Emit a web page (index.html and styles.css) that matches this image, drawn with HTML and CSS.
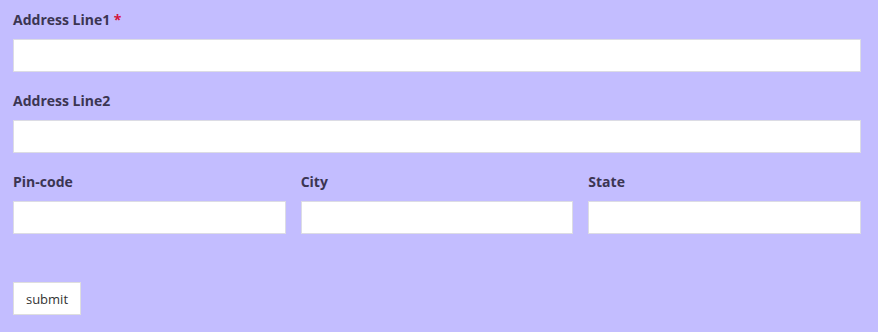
FILE: index.html
```html
<!DOCTYPE html>
<html>
<head>
<meta charset="utf-8">
<link rel="stylesheet" href="styles.css">
</head>
<body>
<form class="form">
  <div class="group">
    <label class="label">Address Line1 <span class="req">*</span></label>
    <input class="input" type="text">
  </div>
  <div class="group">
    <label class="label">Address Line2</label>
    <input class="input" type="text">
  </div>
  <div class="row">
    <div class="group">
      <label class="label">Pin-code</label>
      <input class="input" type="text">
    </div>
    <div class="group">
      <label class="label">City</label>
      <input class="input" type="text">
    </div>
    <div class="group">
      <label class="label">State</label>
      <input class="input" type="text">
    </div>
  </div>
  <div class="actions">
    <button class="btn" type="button">submit</button>
  </div>
</form>
</body>
</html>
```
FILE: styles.css
```css
html, body {
  margin: 0;
  padding: 0;
  background: #c3bdff;
  height: 100%;
}
.form {
  padding: 10px 17px 0 13px;
  display: flex;
  flex-direction: column;
  gap: 19px;
  font-family: "Open Sans", "Noto Sans", sans-serif;
}
.group {
  display: flex;
  flex-direction: column;
  gap: 9px;
  min-width: 0;
}
.label {
  font-size: 14px;
  font-weight: 700;
  line-height: 20px;
  color: #3b3552;
}
.req {
  color: #d4143c;
}
.input {
  box-sizing: border-box;
  height: 33px;
  width: 100%;
  margin: 0;
  border: 1px solid #dcdce4;
  background: #fff;
  outline: none;
  padding: 0 8px;
}
.row {
  display: grid;
  grid-template-columns: 1fr 1fr 1fr;
  gap: 15px;
}
.actions {
  margin-top: 29px;
  display: flex;
}
.btn {
  box-sizing: border-box;
  height: 33px;
  width: 68px;
  background: #fff;
  border: 1px solid #dedede;
  font-family: "Open Sans", "Noto Sans", sans-serif;
  font-size: 13px;
  color: #333;
  padding: 0;
  cursor: pointer;
}
```
